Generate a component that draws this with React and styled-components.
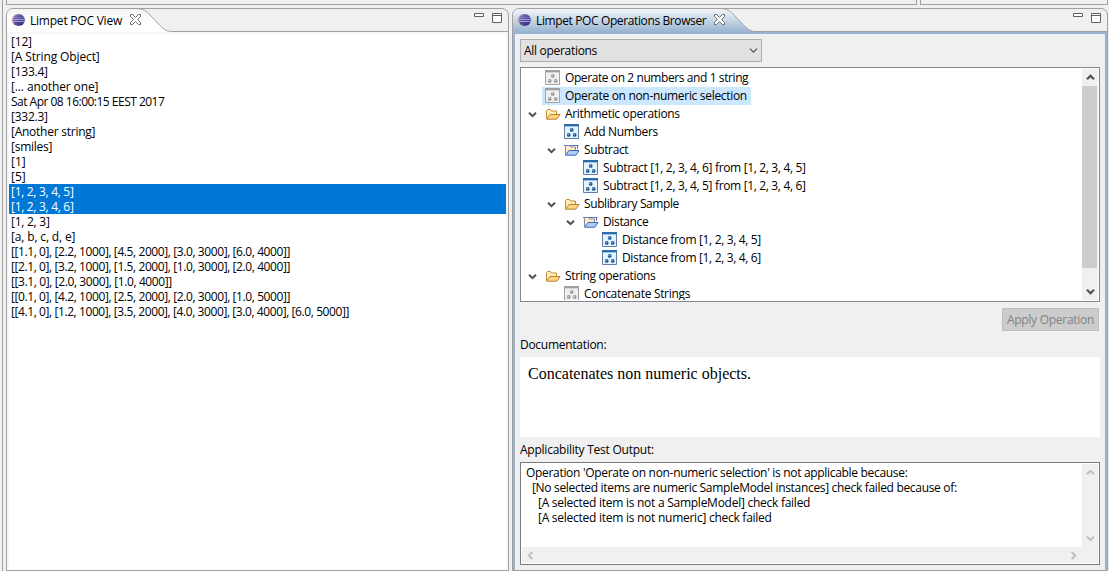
import React from "react";
import styled, { createGlobalStyle } from "styled-components";

const line = "#a0a0a0";
const face = "#f0f0f0";

const GlobalStyle = createGlobalStyle`
  * { box-sizing: border-box; }
  html, body { margin: 0; height: 571px; overflow: hidden; background: ${face}; }
  body { font: 12px/15px "Open Sans", "Noto Sans", sans-serif; color: #000; }
  svg { display: block; flex: none; }
`;

const Workbench = styled.div`
  display: flex;
  width: 1109px;
  height: 571px;
  overflow: hidden;
  background: ${face};
`;

const Sash = styled.div`
  flex: none;
  width: 6px;
  padding-left: 2px;
  &::before { content: ""; display: block; width: 1px; height: 100%; background: ${line}; }
`;

const Main = styled.div`
  display: flex;
  flex-direction: column;
  width: 1102px;
`;

const UpperEdge = styled.div`
  display: flex;
  gap: 3px;
  height: 8px;
  padding-bottom: 3px;
`;

const UpperPanel = styled.div`
  width: ${(p) => p.$width}px;
  border: 1px solid ${line};
  border-top: 0;
`;

const Panels = styled.div`
  display: flex;
  gap: 3px;
  height: 580px;
`;

const Panel = styled.section`
  display: flex;
  flex-direction: column;
  flex: none;
  width: ${(p) => p.$width}px;
  border: 1px solid ${line};
  border-radius: 7px 7px 0 0;
  overflow: hidden;
`;

const Header = styled.header`
  display: flex;
  flex: none;
  height: 23px;
`;

const Tab = styled.div`
  display: flex;
  align-items: center;
  width: ${(p) => p.$width}px;
  padding: 0 0 0 4px;
  white-space: nowrap;
  background: ${(p) =>
    p.$active ? "linear-gradient(#f2f5f9, #99b4d1)" : "linear-gradient(#f3f3f3, #fff 60%)"};
`;

const TabTitle = styled.span`
  flex: 1;
  min-width: 0;
  margin-left: 4px;
  padding-top: 1px;
  letter-spacing: ${(p) => p.$tracking}px;
`;

const CloseButton = styled.span`
  z-index: 1;
  margin: 0 -5px 1px 0;
`;

const HeaderRest = styled.div`
  display: flex;
  flex: 1;
  justify-content: flex-end;
  gap: 8px;
  padding: 4px 6px 0 0;
  border-bottom: 1px solid ${line};
`;

const Body = styled.div`
  flex: 1;
  display: flex;
  flex-direction: column;
  padding: 2px 2px 0;
  background: ${(p) => (p.$active ? "#99b4d1" : "#f7f7f7")};
`;

const List = styled.ul`
  flex: 1;
  margin: 0;
  padding: 0;
  list-style: none;
  background: #fff;
`;

const ListItem = styled.li`
  height: 15px;
  padding-left: 2px;
  white-space: nowrap;
  letter-spacing: ${(p) => p.$tracking || 0}px;
  background: ${(p) => (p.$selected ? "#0078d7" : "transparent")};
  color: ${(p) => (p.$selected ? "#fff" : "#000")};
`;

const Form = styled.div`
  display: flex;
  flex-direction: column;
  height: 536px;
  padding: 5px 5px 5px;
  background: ${face};
`;

const Combo = styled.div`
  display: flex;
  align-items: center;
  justify-content: space-between;
  width: 242px;
  height: 23px;
  padding: 0 3px;
  border: 1px solid #adadad;
  background: #e1e1e1;
`;

const Tree = styled.div`
  display: flex;
  height: 235px;
  margin-top: 5px;
  padding: 1px;
  border: 1px solid #828790;
  background: #fff;
`;

const Rows = styled.div`
  flex: 1;
  overflow: hidden;
`;

const Row = styled.div`
  display: flex;
  align-items: center;
  height: 18px;
  padding-left: ${(p) => p.$level * 19 + 1}px;
  white-space: nowrap;
`;

const Twisty = styled.span`
  display: flex;
  justify-content: center;
  width: 19px;
  padding-top: 1px;
`;

const Label = styled.span`
  display: flex;
  align-items: center;
  gap: 4px;
  height: 18px;
  padding: 0 4px 0 3px;
  background: ${(p) => (p.$selected ? "#cce8ff" : "transparent")};
`;

const Text = styled.span`
  letter-spacing: ${(p) => p.$tracking || 0}px;
`;

const ScrollBar = styled.div`
  display: flex;
  flex-direction: ${(p) => (p.$horizontal ? "row" : "column")};
  justify-content: space-between;
  flex: none;
  ${(p) => (p.$horizontal ? "height: 16px; padding-right: 17px;" : "width: 16px;")}
  background: ${face};
`;

const ScrollButton = styled.span`
  display: flex;
  align-items: center;
  justify-content: center;
  width: 16px;
  height: 17px;
`;

const Thumb = styled.span`
  flex: none;
  width: 15px;
  height: 182px;
  margin-bottom: auto;
  background: #cdcdcd;
`;

const Apply = styled.button`
  align-self: flex-end;
  width: 97px;
  height: 23px;
  margin: 6px 1px 0 0;
  padding: 1px 0 0;
  border: 1px solid #bfbfbf;
  background: #ccc;
  color: #838383;
  font: inherit;
  white-space: nowrap;
  letter-spacing: ${(p) => p.$tracking}px;
`;

const Caption = styled.div`
  height: 15px;
  margin-top: ${(p) => p.$top}px;
  letter-spacing: ${(p) => p.$tracking}px;
`;

const Documentation = styled.div`
  height: 80px;
  margin-top: 5px;
  padding: 8px;
  background: #fff;
  font: 16px/18px "Liberation Serif", serif;
`;

const Output = styled.div`
  display: flex;
  flex-direction: column;
  height: 103px;
  margin-top: 5px;
  padding: 1px;
  border: 1px solid #7a7a7a;
  background: #fff;
`;

const OutputArea = styled.div`
  display: flex;
  flex: 1;
`;

const OutputLines = styled.div`
  flex: 1;
  padding: 1px 0 0 4px;
`;

const OutputLine = styled.div`
  padding-left: ${(p) => p.$indent * 6}px;
  white-space: nowrap;
  letter-spacing: ${(p) => p.$tracking || 0}px;
`;

const Eclipse = () => (
  <svg width="15" height="14" viewBox="0 0 15 14">
    <defs>
      <linearGradient id="globe" x1="0" y1="0" x2="1" y2="1">
        <stop offset="0" stopColor="#8f87c6" />
        <stop offset="0.5" stopColor="#554b9c" />
        <stop offset="1" stopColor="#35296a" />
      </linearGradient>
    </defs>
    <path d="M5 .8C2 2.200 .6 4.500.6 7S2 11.800 5 13.200C3.500 9 3.500 5 5 .8Z" fill="#e8a06a" opacity=".6" />
    <circle cx="7.800" cy="7" r="6.100" fill="url(#globe)" />
    <path d="M.8 6.500h13.600M.8 8.500h13.600" stroke="#a9a6e0" strokeWidth=".9" />
    <path d="M2.500 4.500h10.500" stroke="#9690cf" strokeWidth=".5" />
  </svg>
);

const CloseIcon = () => (
  <svg width="11" height="11" viewBox="0 0 11 11">
    <path
      d="M.5.5h2l3 3 3-3h2v2l-3 3 3 3v2h-2l-3-3-3 3h-2v-2l3-3-3-3Z"
      fill="#fff"
      stroke="#5f5f5f"
      strokeWidth=".9"
    />
  </svg>
);

const TabTail = ({ active }) => {
  const id = active ? "tail-active" : "tail-plain";
  const curve = "M0-.5C7-.5 10 2 14 6L24 16.500C28 20.500 31 22.500 36 22.500";
  return (
    <svg width="36" height="23" viewBox="0 0 36 23">
      <defs>
        <linearGradient id={id} gradientUnits="userSpaceOnUse" x1="0" y1="0" x2="0" y2="23">
          <stop offset="0" stopColor={active ? "#f2f5f9" : "#f3f3f3"} />
          <stop offset={active ? 1 : 0.6} stopColor={active ? "#99b4d1" : "#fff"} />
        </linearGradient>
      </defs>
      <path d={`${curve}V23H0Z`} fill={`url(#${id})`} />
      <path d={curve} fill="none" stroke={line} />
    </svg>
  );
};

const WindowButtons = () => (
  <>
    <svg width="10" height="4" viewBox="0 0 10 4">
      <path d="M.5.5h9v3h-9Z" fill="#fff" stroke="#606060" />
    </svg>
    <svg width="10" height="10" viewBox="0 0 10 10">
      <path d="M.5.5h9v9h-9ZM0 2.500h10" fill="#fff" stroke="#606060" />
    </svg>
  </>
);

const turns = { down: 0, left: 90, up: 180, right: 270 };

const Chevron = ({ dir = "down", color = "#505050", weight = 2 }) => (
  <svg width="9" height="9" viewBox="0 0 9 9">
    <path
      d="M1 2.700 4.500 6.200 8 2.700"
      fill="none"
      stroke={color}
      strokeWidth={weight}
      transform={`rotate(${turns[dir]} 4.5 4.5)`}
    />
  </svg>
);

const FolderIcon = ({ blue }) => (
  <svg width="16" height="16" viewBox="0 0 16 16">
    <path
      d="M1.500 12.500V4.500L2.500 3.500H5.500L6.500 5H11.500V8"
      fill={blue ? "#fbeec4" : "#fdeeb8"}
      stroke={blue ? "#8a86a0" : "#c48b3c"}
    />
    <path
      d="M1.500 13.200 5 8.500H15L11.800 13.200Z"
      fill={blue ? "#aed0f8" : "#fbd583"}
      stroke={blue ? "#3f66b5" : "#bd7f2c"}
      strokeLinejoin="round"
    />
    {blue && <path d="M0 3.500h3M5.500 3.500h9M13.500 3.500V7" stroke="#5a72b4" fill="none" />}
  </svg>
);

const OperationIcon = ({ disabled }) => {
  const ink = disabled ? "#969696" : "#1f5590";
  return (
    <svg width="16" height="16" viewBox="0 0 16 16">
      <path d="M.5.5h14v14H.5Z" fill={disabled ? "#f0f0f0" : "#e4f4fc"} stroke={disabled ? "#a2a2a2" : "#637fa6"} />
      <path d="M0 0h15v2H0Z" fill={disabled ? "#a0a0a0" : "#2e69a8"} />
      <path d="M1 2.500h13" stroke={disabled ? "#d4d4d4" : "#9cc4e6"} />
      <g fill={ink}>
        <circle cx="7.700" cy="5.900" r="1.900" />
        <circle cx="4.700" cy="10.900" r="1.900" />
        <circle cx="10.700" cy="10.900" r="1.900" />
      </g>
      <g fill={disabled ? "#dcdcdc" : "#8fbce6"}>
        <circle cx="7.300" cy="5.500" r=".8" />
        <circle cx="4.300" cy="10.500" r=".8" />
        <circle cx="10.300" cy="10.500" r=".8" />
      </g>
    </svg>
  );
};

const items = [
  { text: "[12]", tracking: -0.2 },
  { text: "[A String Object]", tracking: -0.13 },
  { text: "[133.4]", tracking: -0.25 },
  { text: "[... another one]", tracking: -0.12 },
  { text: "Sat Apr 08 16:00:15 EEST 2017", tracking: -0.51 },
  { text: "[332.3]", tracking: -0.25 },
  { text: "[Another string]", tracking: -0.25 },
  { text: "[smiles]", tracking: -0.25 },
  { text: "[1]" },
  { text: "[5]" },
  { text: "[1, 2, 3, 4, 5]", tracking: -0.3, selected: true },
  { text: "[1, 2, 3, 4, 6]", tracking: -0.3, selected: true },
  { text: "[1, 2, 3]", tracking: -0.25 },
  { text: "[a, b, c, d, e]", tracking: -0.15 },
  { text: "[[1.1, 0], [2.2, 1000], [4.5, 2000], [3.0, 3000], [6.0, 4000]]", tracking: -0.405 },
  { text: "[[2.1, 0], [3.2, 1000], [1.5, 2000], [1.0, 3000], [2.0, 4000]]", tracking: -0.405 },
  { text: "[[3.1, 0], [2.0, 3000], [1.0, 4000]]", tracking: -0.39 },
  { text: "[[0.1, 0], [4.2, 1000], [2.5, 2000], [2.0, 3000], [1.0, 5000]]", tracking: -0.405 },
  { text: "[[4.1, 0], [1.2, 1000], [3.5, 2000], [4.0, 3000], [3.0, 4000], [6.0, 5000]]", tracking: -0.41 },
];

const nodes = [
  { text: "Operate on 2 numbers and 1 string", level: 0, kind: "off", tracking: -0.41 },
  { text: "Operate on non-numeric selection", level: 0, kind: "off", tracking: -0.31, selected: true },
  { text: "Arithmetic operations", level: 0, kind: "folder", tracking: -0.33 },
  { text: "Add Numbers", level: 1, kind: "op", tracking: -0.33 },
  { text: "Subtract", level: 1, kind: "blue", tracking: -0.36 },
  { text: "Subtract [1, 2, 3, 4, 6] from [1, 2, 3, 4, 5]", level: 2, kind: "op", tracking: -0.34 },
  { text: "Subtract [1, 2, 3, 4, 5] from [1, 2, 3, 4, 6]", level: 2, kind: "op", tracking: -0.34 },
  { text: "Sublibrary Sample", level: 1, kind: "folder", tracking: -0.4 },
  { text: "Distance", level: 2, kind: "blue", tracking: -0.36 },
  { text: "Distance from [1, 2, 3, 4, 5]", level: 3, kind: "op", tracking: -0.34 },
  { text: "Distance from [1, 2, 3, 4, 6]", level: 3, kind: "op", tracking: -0.34 },
  { text: "String operations", level: 0, kind: "folder", tracking: -0.34 },
  { text: "Concatenate Strings", level: 1, kind: "off", tracking: -0.32 },
];

const output = [
  {
    text: "Operation 'Operate on non-numeric selection' is not applicable because:",
    indent: 0,
    tracking: -0.31,
  },
  {
    text: "[No selected items are numeric SampleModel instances] check failed because of:",
    indent: 1,
    tracking: -0.32,
  },
  { text: "[A selected item is not a SampleModel] check failed", indent: 2, tracking: -0.26 },
  { text: "[A selected item is not numeric] check failed", indent: 2, tracking: -0.26 },
];

const PanelHeader = ({ title, tracking, width, active }) => (
  <Header>
    <Tab $width={width} $active={active}>
      <Eclipse />
      <TabTitle $tracking={tracking}>{title}</TabTitle>
      <CloseButton>
        <CloseIcon />
      </CloseButton>
    </Tab>
    <TabTail active={active} />
    <HeaderRest>
      <WindowButtons />
    </HeaderRest>
  </Header>
);

const TreeRow = ({ text, level, kind, selected, tracking }) => {
  const folder = kind === "folder" || kind === "blue";
  return (
    <Row $level={level}>
      <Twisty>{folder && <Chevron />}</Twisty>
      <Label $selected={selected}>
        {folder ? <FolderIcon blue={kind === "blue"} /> : <OperationIcon disabled={kind === "off"} />}
        <Text $tracking={tracking}>{text}</Text>
      </Label>
    </Row>
  );
};

export default function App() {
  return (
    <Workbench>
      <GlobalStyle />
      <Sash />
      <Main>
        <UpperEdge>
          <UpperPanel $width={911} />
          <UpperPanel $width={188} />
        </UpperEdge>
        <Panels>
          <Panel $width={503}>
            <PanelHeader title="Limpet POC View" tracking={-0.22} width={129} />
            <Body>
              <List>
                {items.map((item) => (
                  <ListItem key={item.text} $selected={item.selected} $tracking={item.tracking}>
                    {item.text}
                  </ListItem>
                ))}
              </List>
            </Body>
          </Panel>
          <Panel $width={596}>
            <PanelHeader title="Limpet POC Operations Browser" tracking={-0.38} width={207} active />
            <Body $active>
              <Form>
                <Combo>
                  <Text $tracking={-0.3}>All operations</Text>
                  <Chevron weight={1.2} />
                </Combo>
                <Tree>
                  <Rows>
                    {nodes.map((node) => (
                      <TreeRow key={node.text} {...node} />
                    ))}
                  </Rows>
                  <ScrollBar>
                    <ScrollButton><Chevron dir="up" weight={2.2} /></ScrollButton>
                    <Thumb />
                    <ScrollButton><Chevron weight={2.2} /></ScrollButton>
                  </ScrollBar>
                </Tree>
                <Apply disabled $tracking={-0.28}>Apply Operation</Apply>
                <Caption $top={6} $tracking={-0.28}>Documentation:</Caption>
                <Documentation>Concatenates non numeric objects.</Documentation>
                <Caption $top={5} $tracking={-0.24}>Applicability Test Output:</Caption>
                <Output>
                  <OutputArea>
                    <OutputLines>
                      {output.map((row) => (
                        <OutputLine key={row.text} $indent={row.indent} $tracking={row.tracking}>
                          {row.text}
                        </OutputLine>
                      ))}
                    </OutputLines>
                    <ScrollBar>
                      <ScrollButton><Chevron dir="up" color="#bfbfbf" /></ScrollButton>
                      <ScrollButton><Chevron color="#bfbfbf" /></ScrollButton>
                    </ScrollBar>
                  </OutputArea>
                  <ScrollBar $horizontal>
                    <ScrollButton><Chevron dir="left" color="#bfbfbf" /></ScrollButton>
                    <ScrollButton><Chevron dir="right" color="#bfbfbf" /></ScrollButton>
                  </ScrollBar>
                </Output>
              </Form>
            </Body>
          </Panel>
        </Panels>
      </Main>
    </Workbench>
  );
}
